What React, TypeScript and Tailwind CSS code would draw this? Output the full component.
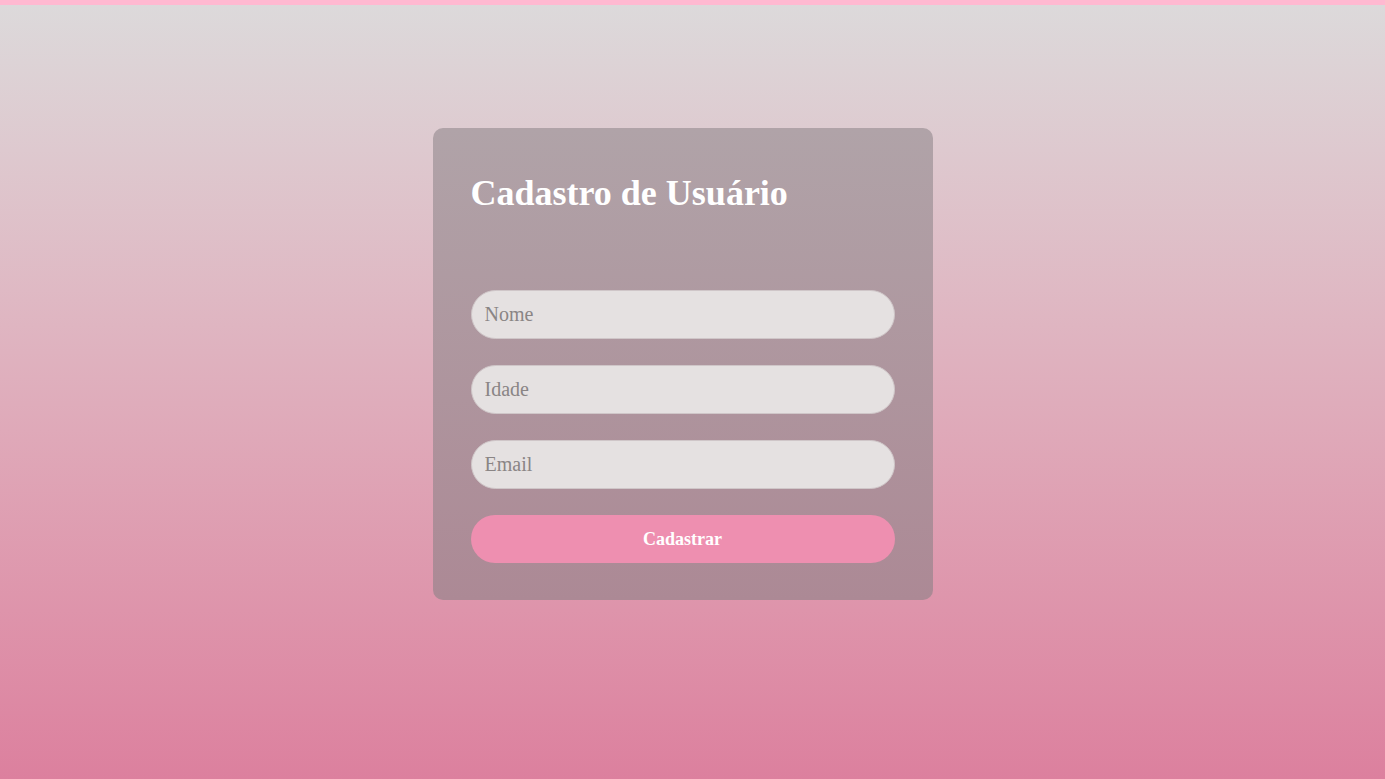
import React from 'react'

export default function App() {
  const fields = ['Nome', 'Idade', 'Email']

  return (
    <div
      className="min-h-screen w-full flex flex-col bg-gradient-to-b from-[#dcdadb] to-[#dc809e]"
      style={{ fontFamily: '"Liberation Serif", "DejaVu Serif", serif' }}
    >
      <div className="h-[5px] w-full bg-[#ffb9d1]" />
      <div className="flex justify-center pt-[123px] pb-10 pr-[20px]">
        <form
          className="w-[500px] rounded-[10px] bg-gradient-to-b from-[#b0a3a8] to-[#ac8995] px-[38px] pt-[45px] pb-[37px]"
          onSubmit={(e) => e.preventDefault()}
        >
          <h1 className="text-[36px] leading-[41px] font-bold text-white mb-[76px]">Cadastro de Usuário</h1>
          <div className="flex flex-col gap-[26px]">
            {fields.map((f) => (
              <input
                key={f}
                type="text"
                placeholder={f}
                className="h-[49px] w-full rounded-full border border-[#cfc6c8] bg-[#e5e1e1] px-[13px] text-[20px] text-[#555] placeholder:text-[#8a8585] outline-none"
              />
            ))}
            <button
              type="submit"
              className="h-[48px] w-full rounded-full bg-[#ee8fb0] text-[18px] font-bold text-white"
            >
              Cadastrar
            </button>
          </div>
        </form>
      </div>
    </div>
  )
}
